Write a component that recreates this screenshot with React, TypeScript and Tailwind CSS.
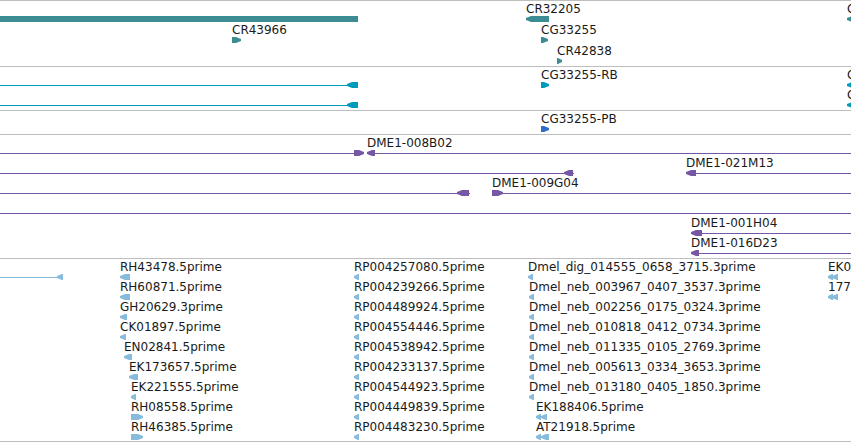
type Feature = {
  start: number;
  end?: number; // open features run on past the right edge
  strand?: "+" | "-";
  label?: string;
  parts?: number[][]; // exon blocks, joined by a thin line
};

type Track = {
  name: string;
  color: string;
  className: string;
  rows: Feature[][];
};

const HEAD = 5;

const tracks: Track[] = [
  {
    name: "Genes",
    color: "text-[#3c8d93]",
    className: "gap-px pb-0.5",
    rows: [
      [
        { start: 0, end: 358 },
        { start: 526, end: 549, strand: "-", label: "CR32205" },
        { start: 847, end: 870, strand: "-", label: "C" },
      ],
      [
        { start: 232, end: 241, strand: "+", label: "CR43966" },
        { start: 541, end: 548, strand: "+", label: "CG33255" },
      ],
      [{ start: 557, end: 562, strand: "+", label: "CR42838" }],
    ],
  },
  {
    name: "Transcripts",
    color: "text-[#009bbb]",
    className: "pb-0.5",
    rows: [
      [
        { start: 0, end: 358, strand: "-", parts: [[347, 358]] },
        { start: 541, end: 549, strand: "+", label: "CG33255-RB" },
        { start: 847, end: 870, strand: "-", label: "C" },
      ],
      [
        { start: 0, end: 358, strand: "-", parts: [[347, 358]] },
        { start: 847, end: 870, strand: "-", label: "C" },
      ],
    ],
  },
  {
    name: "Proteins",
    color: "text-[#336bcc]",
    className: "pb-0.5",
    rows: [[{ start: 541, end: 549, strand: "+", label: "CG33255-PB" }]],
  },
  {
    name: "BAC ends",
    color: "text-[#7557a5]",
    className: "pb-0.5",
    rows: [
      [
        { start: 0, end: 364, strand: "+", parts: [[354, 364]] },
        { start: 367, strand: "-", label: "DME1-008B02", parts: [[367, 375]] },
      ],
      [
        { start: 0, end: 574, strand: "-", parts: [[564, 573]] },
        { start: 686, strand: "-", label: "DME1-021M13", parts: [[686, 696]] },
      ],
      [
        { start: 0, end: 470, strand: "-", parts: [[457, 469]] },
        { start: 492, strand: "+", label: "DME1-009G04", parts: [[492, 503]] },
      ],
      [{ start: 0, parts: [] }],
      [{ start: 691, strand: "-", label: "DME1-001H04", parts: [[691, 702]] }],
      [{ start: 691, strand: "-", label: "DME1-016D23", parts: [[691, 699]] }],
    ],
  },
  {
    name: "ESTs",
    color: "text-[#87bbdc]",
    className: "border-b pb-px",
    rows: [
      [
        { start: 0, end: 63, strand: "-", parts: [[57, 63]] },
        { start: 120, end: 130, strand: "-", label: "RH43478.5prime" },
        { start: 354, end: 359, strand: "-", label: "RP004257080.5prime" },
        { start: 528, end: 533, strand: "-", label: "Dmel_dig_014555_0658_3715.3prime" },
        { start: 828, end: 838, strand: "-", label: "EK0", parts: [[828, 833], [832, 838]] },
      ],
      [
        { start: 120, end: 130, strand: "-", label: "RH60871.5prime" },
        { start: 354, end: 359, strand: "-", label: "RP004239266.5prime" },
        { start: 529, end: 534, strand: "-", label: "Dmel_neb_003967_0407_3537.3prime" },
        { start: 828, end: 838, strand: "-", label: "177", parts: [[828, 833], [832, 838]] },
      ],
      [
        { start: 120, end: 127, strand: "-", label: "GH20629.3prime" },
        { start: 354, end: 359, strand: "-", label: "RP004489924.5prime" },
        { start: 529, end: 534, strand: "-", label: "Dmel_neb_002256_0175_0324.3prime" },
      ],
      [
        { start: 120, end: 126, strand: "-", label: "CK01897.5prime" },
        { start: 354, end: 359, strand: "-", label: "RP004554446.5prime" },
        { start: 529, end: 534, strand: "-", label: "Dmel_neb_010818_0412_0734.3prime" },
      ],
      [
        { start: 124, end: 132, strand: "-", label: "EN02841.5prime" },
        { start: 354, end: 359, strand: "-", label: "RP004538942.5prime" },
        { start: 529, end: 534, strand: "-", label: "Dmel_neb_011335_0105_2769.3prime" },
      ],
      [
        { start: 129, end: 138, strand: "-", label: "EK173657.5prime" },
        { start: 354, end: 359, strand: "-", label: "RP004233137.5prime" },
        { start: 529, end: 534, strand: "-", label: "Dmel_neb_005613_0334_3653.3prime" },
      ],
      [
        { start: 131, end: 136, strand: "-", label: "EK221555.5prime" },
        { start: 354, end: 359, strand: "-", label: "RP004544923.5prime" },
        { start: 529, end: 534, strand: "-", label: "Dmel_neb_013180_0405_1850.3prime" },
      ],
      [
        { start: 131, end: 143, strand: "+", label: "RH08558.5prime" },
        { start: 354, end: 359, strand: "-", label: "RP004449839.5prime" },
        { start: 536, end: 547, strand: "-", label: "EK188406.5prime", parts: [[536, 541], [541, 547]] },
      ],
      [
        { start: 131, end: 143, strand: "+", label: "RH46385.5prime" },
        { start: 354, end: 359, strand: "-", label: "RP004483230.5prime" },
        { start: 536, end: 549, strand: "-", label: "AT21918.5prime", parts: [[536, 541], [541, 549]] },
      ],
    ],
  },
];

// blunt-tipped arrow block, 6px tall
function blockPath(a: number, b: number, strand?: "+" | "-") {
  const head = Math.min(HEAD, b - a - 1);
  if (strand === "-") return `M${a} 2L${a + head} 0H${b}V6H${a + head}L${a} 4Z`;
  if (strand === "+") return `M${a} 0H${b - head}L${b} 2V4L${b - head} 6H${a}Z`;
  return `M${a} 0H${b}V6H${a}Z`;
}

function Glyph({ feature }: { feature: Feature }) {
  const { start, end, strand, parts } = feature;
  const blocks = parts ?? [[start, end ?? start]];
  return (
    <g>
      {parts && (
        <line x1={start} x2={end ?? "100%"} y1={3.5} y2={3.5} stroke="currentColor" shapeRendering="crispEdges" />
      )}
      {blocks.map(([a, b]) => (
        <path key={a} d={blockPath(a, b, strand)} fill="currentColor" />
      ))}
    </g>
  );
}

function Row({ features }: { features: Feature[] }) {
  return (
    <div className="relative overflow-hidden pt-3.5">
      {features
        .filter((f) => f.label)
        .map((f) => (
          <span
            key={f.start}
            className="absolute top-0 whitespace-nowrap text-[12px] leading-[14px] text-[#1a1a1a]"
            style={{ left: f.start }}
          >
            {f.label}
          </span>
        ))}
      <svg className="block h-1.5 w-full" aria-hidden="true">
        {features.map((f) => (
          <Glyph key={f.start} feature={f} />
        ))}
      </svg>
    </div>
  );
}

export default function App() {
  return (
    <main className="w-full bg-white font-['DejaVu_Sans',sans-serif]">
      {tracks.map((t) => (
        <section
          key={t.name}
          aria-label={t.name}
          className={`flex flex-col border-t border-[#bebebe] pt-px ${t.className} ${t.color}`}
        >
          {t.rows.map((features, i) => (
            <Row key={i} features={features} />
          ))}
        </section>
      ))}
    </main>
  );
}
